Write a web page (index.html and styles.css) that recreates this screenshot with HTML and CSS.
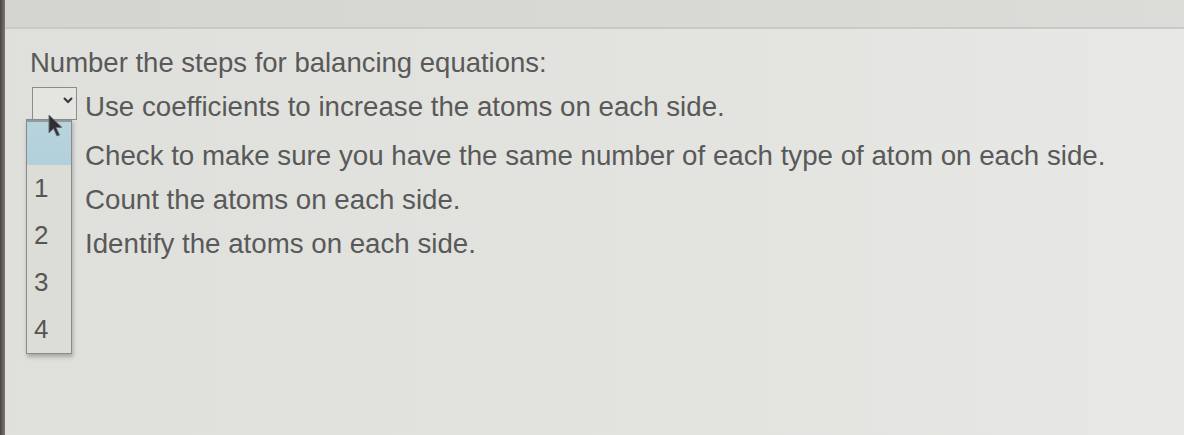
FILE: index.html
```html
<!DOCTYPE html>
<html>
<head>
<meta charset="utf-8">
<link rel="stylesheet" href="styles.css">
</head>
<body>
<div class="screen">
  <div class="edge"></div>
  <div class="main">
    <div class="topbar"></div>
    <div class="content">
      <div class="title">Number the steps for balancing equations:</div>
      <div class="rows">
        <div class="row first">
          <div class="slot"><div class="select"><svg class="chev" width="12" height="8" viewBox="0 0 12 8"><path d="M2 2 L6 6 L10 2" fill="none" stroke="#3a3a3a" stroke-width="2.2"/></svg></div></div>
          <div class="label">Use coefficients to increase the atoms on each side.</div>
        </div>
        <div class="row second">
          <div class="slot"></div>
          <div class="label">Check to make sure you have the same number of each type of atom on each side.</div>
        </div>
        <div class="row">
          <div class="slot"></div>
          <div class="label">Count the atoms on each side.</div>
        </div>
        <div class="row">
          <div class="slot"></div>
          <div class="label">Identify the atoms on each side.</div>
        </div>
      </div>
      <div class="dropdown">
        <div class="opt blank"></div>
        <div class="opt">1</div>
        <div class="opt">2</div>
        <div class="opt">3</div>
        <div class="opt">4</div>
      </div>
      <svg class="cursor" width="16" height="24" viewBox="0 0 16 24"><path d="M1 1 L1 19 L5.5 14.5 L9 22 L11.5 21 L8 13.5 L14 13.5 Z" fill="#2e2e33" stroke="#6d6d72" stroke-width="1"/></svg>
    </div>
  </div>
</div>
</body>
</html>
```

FILE: styles.css
```css
html, body {
  margin: 0;
  padding: 0;
}
body {
  width: 1184px;
  height: 435px;
  overflow: hidden;
  font-family: "Liberation Sans", Arial, sans-serif;
  color: #595959;
}
.screen {
  display: flex;
  height: 435px;
}
.edge {
  width: 5px;
  background: linear-gradient(to right, #4a4542, #7a7672);
}
.main {
  flex: 1;
  display: flex;
  flex-direction: column;
  background: linear-gradient(to right, #dfe0db, #e3e4e0 60%, #e8e9e6);
}
.topbar {
  height: 27px;
  background: linear-gradient(to right, #d4d5cf, #d9dad5 70%, #dcdcd8);
  border-bottom: 2px solid #c9cac5;
}
.content {
  position: relative;
  flex: 1;
  padding-left: 25px;
}
.title {
  font-size: 27.5px;
  margin-top: 17px;
  height: 34px;
  line-height: 34px;
}
.rows {
  display: flex;
  flex-direction: column;
}
.row {
  display: flex;
  align-items: center;
  height: 44px;
}
.row.first {
  margin-top: 7px;
  height: 36px;
}
.row.second {
  margin-top: 9px;
  height: 44px;
}
.slot {
  width: 55px;
  flex: none;
  display: flex;
}
.select {
  width: 45px;
  height: 33px;
  margin-left: 2px;
  margin-top: -3px;
  border: 1px solid #8c8c8a;
  background: #e4e5e1;
  box-sizing: border-box;
  display: flex;
  justify-content: flex-end;
  align-items: flex-start;
  padding: 8px 2px 0 0;
}
.label {
  font-size: 27.7px;
  line-height: 32px;
  padding-top: 4px;
  white-space: nowrap;
}
.dropdown {
  position: absolute;
  left: 21px;
  top: 90px;
  width: 44px;
  border: 1px solid #8a8a88;
  background: #dcddd7;
  box-shadow: 1px 3px 4px rgba(0,0,0,0.25);
  display: flex;
  flex-direction: column;
}
.opt {
  height: 47px;
  font-size: 26px;
  padding-left: 7px;
  display: flex;
  align-items: center;
  color: #555;
}
.opt.blank {
  height: 43px;
  background: linear-gradient(#b8d3dc, #b2d1dc);
  border-top: 2px solid #8d9a9e;
}
.cursor {
  position: absolute;
  left: 43px;
  top: 85px;
}
```
